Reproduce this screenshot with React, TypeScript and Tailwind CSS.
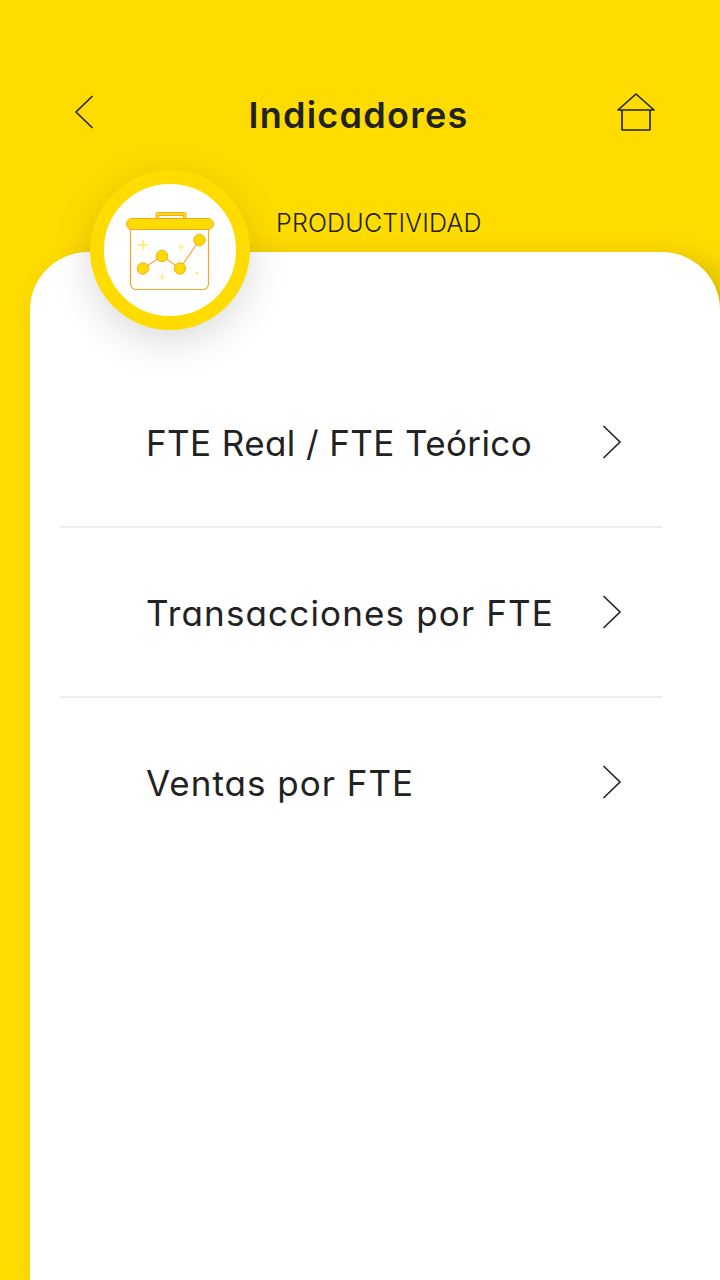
import { clsx } from "clsx";

const indicators = [
  { label: "FTE Real / FTE Teórico", className: "tracking-[0.4px]" },
  { label: "Transacciones por FTE", className: "tracking-[1.15px]" },
  { label: "Ventas por FTE", className: "tracking-[1px]" },
];

const points = [
  { x: 17, y: 58.5 },
  { x: 36, y: 46 },
  { x: 54, y: 58.5 },
  { x: 73.5, y: 30 },
];

const sparkles = [
  { x: 17, y: 35, size: 5, opacity: 0.6 },
  { x: 55, y: 37, size: 3.2, opacity: 0.45 },
  { x: 36, y: 67, size: 3.2, opacity: 0.45 },
  { x: 71, y: 63, size: 1.5, opacity: 0.6 },
];

function Chevron({ direction }: { direction: "left" | "right" }) {
  return (
    <svg
      className={clsx("h-9 w-5", direction === "left" && "rotate-180")}
      viewBox="0 0 20 36"
      fill="none"
      stroke="currentColor"
      strokeWidth="1.6"
    >
      <path d="M1.5 2 18 18 1.5 34" />
    </svg>
  );
}

function HomeIcon() {
  return (
    <svg className="h-10 w-10" viewBox="0 0 40 40" fill="none" stroke="currentColor" strokeWidth="1.6">
      <path d="M2 18 20 2l18 16Z" strokeLinejoin="round" />
      <path d="M6 18v20h28V18" strokeLinejoin="round" />
    </svg>
  );
}

function BoardIcon() {
  return (
    <svg className="h-20 w-[88px]" viewBox="0 0 88 80" fill="none" stroke="#f9a72b">
      {/* Board */}
      <path d="M4.5 14v60a5.5 5.5 0 0 0 5.5 5.5h67a5.5 5.5 0 0 0 5.5-5.5V14" strokeWidth="1.2" />
      <path d="M30 8.5V4a1.5 1.5 0 0 1 1.5-1.5h27A1.5 1.5 0 0 1 60 4v4.5h-2.5v-3h-25v3Z" fill="#ffdc00" />
      <rect x="0.5" y="8.5" width="87" height="11" rx="5.5" fill="#ffdc00" />

      {/* Trend */}
      <polyline points={points.map((p) => `${p.x},${p.y}`).join(" ")} strokeWidth="1.2" />
      {points.map((p) => (
        <circle key={p.x} cx={p.x} cy={p.y} r="5.7" fill="#ffdc00" />
      ))}

      {/* Sparkles */}
      {sparkles.map((s) => (
        <path
          key={s.x + s.y}
          d={`M${s.x - s.size} ${s.y}h${s.size * 2}M${s.x} ${s.y - s.size}v${s.size * 2}`}
          stroke="#ffdc00"
          strokeWidth="1.4"
          opacity={s.opacity}
        />
      ))}
    </svg>
  );
}

export default function App() {
  return (
    <div className="flex h-[1280px] w-[720px] flex-col overflow-hidden bg-[#ffdc00] font-['Inter','Open_Sans',sans-serif] text-[#222222] [font-feature-settings:'cv11','ss03']">
      {/* Header */}
      <header className="flex h-[170px] shrink-0 items-start justify-between pl-[74px] pr-16 pt-[92px]">
        <button className="mt-0.5" aria-label="Volver">
          <Chevron direction="left" />
        </button>
        <h1 className="ml-[7px] mt-[3px] text-[36px] font-[560] leading-10 tracking-[1.25px]">Indicadores</h1>
        <button aria-label="Inicio">
          <HomeIcon />
        </button>
      </header>

      <div className="flex h-[82px] shrink-0 items-start pl-[276px] pt-[37px]">
        <h2 className="text-[25px] font-light leading-8 tracking-[0.2px]">PRODUCTIVIDAD</h2>
      </div>

      <main className="relative ml-[30px] flex-1 rounded-t-[58px] bg-white pl-[30px] pr-[58px] pt-[106px] shadow-[14px_10px_30px_rgba(0,0,0,0.2)]">
        <div className="absolute -top-[82px] left-[60px] flex size-40 items-center justify-center rounded-full border-[14px] border-[#ffdc00] bg-white shadow-[0_10px_40px_rgba(0,0,0,0.15)]">
          <BoardIcon />
        </div>

        <ul>
          {indicators.map((item) => (
            <li
              key={item.label}
              className="flex h-[170px] items-center justify-between border-b-2 border-[#eeeeee] pl-[86px] pr-10 last:border-transparent"
            >
              <span className={clsx("mt-px whitespace-nowrap text-[35px] leading-10", item.className)}>
                {item.label}
              </span>
              <Chevron direction="right" />
            </li>
          ))}
        </ul>
      </main>
    </div>
  );
}
